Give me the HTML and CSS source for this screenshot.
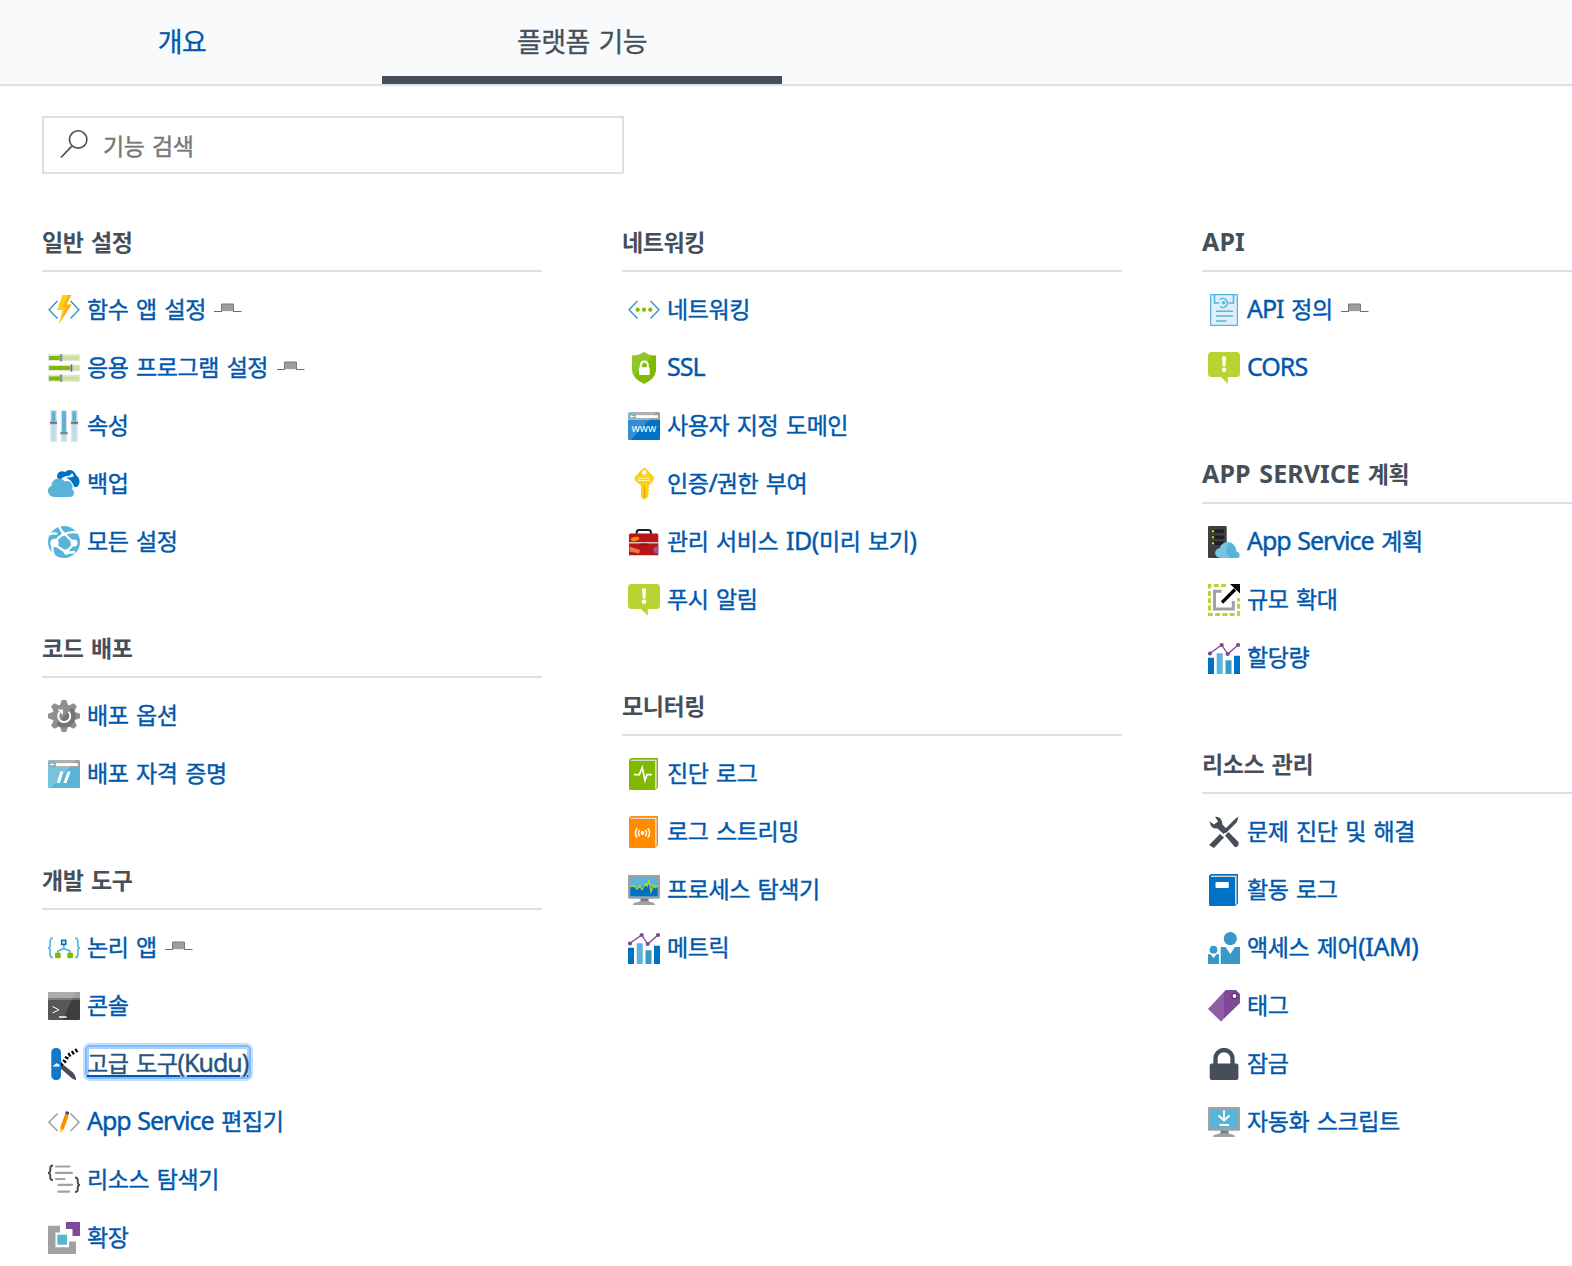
FILE: index.html
```html
<!DOCTYPE html>
<html lang="ko">
<head>
<meta charset="utf-8">
<title>플랫폼 기능</title>
<link rel="stylesheet" href="styles.css">
</head>
<body>
<svg class="sprite" aria-hidden="true">
  <symbol id="pin" viewBox="0 0 28 10"><path d="M0 8.500H7.500M19 8.500H27.500" stroke="#6d6d6d" stroke-width="1.200"/><rect x="7.500" y="1" width="12" height="7.200" fill="#9c9ea0"/><path d="M7.500 9V1H19.500V9" fill="none" stroke="#77797b"/></symbol>
  <symbol id="functions" viewBox="0 0 32 32"><path d="M9.500 7 1 15.700 9.500 24.500M22.500 7 31 15.700 22.500 24.500" fill="none" stroke="#3999c6" stroke-width="1.500"/><path d="M14.300 1H23.300L18.700 10.500H23.700L10.700 30.300 14.700 16H9Z" fill="#fcd116"/><path d="M20 1H23.300L18.700 10.500H23.700L10.700 30.300 18 13H14.500Z" fill="#ff9f17" opacity=".65"/></symbol>
  <symbol id="sliders" viewBox="0 0 32 32"><path d="M0 2.300h32v6.700H0zM0 12.700h32v6.600H0zM0 22.700h32v7H0z" fill="#e3e3e3"/><path d="M1 4h30v4H1zM1 14h30v4H1zM1 24.500h30v4H1z" fill="#cbe38f"/><path d="M1 4h11v4H1zM1 14h21v4H1zM1 24.500h11v4H1z" fill="#7fba00"/><path d="M11.500 2.300h3v7h-3zM22 12.500h3v7h-3zM11.500 22.700h3v7h-3z" fill="#b5b5b5"/><path d="M13 2.300v7M23.500 12.500v7M13 22.700v7" stroke="#666" stroke-width="1"/></symbol>
  <symbol id="properties" viewBox="0 0 32 32"><path d="M2.300 0h6.700v32H2.300zM12.700 0h6.300v32h-6.300zM23 0h6.700v32H23z" fill="#e1e1e1"/><path d="M3.500 1.300h4v29.500h-4zM14 1.300h4v29.500h-4zM24.300 1.300h4v29.500h-4z" fill="#b8dff0"/><path d="M3.500 1.300h4v11h-4zM14 1.300h4v21h-4zM24.300 1.300h4v11h-4z" fill="#59b4d9"/><path d="M2 11.300h7v3.200H2zM12.500 21.500h7v3.200h-7zM23 11.300h7v3.200h-7z" fill="#b5b5b5"/><path d="M2 12.800h7M12.500 23h7M23 12.800h7" stroke="#555" stroke-width="1.200"/></symbol>
  <symbol id="backup" viewBox="0 0 32 32"><path d="M9 9C9 4 13 2 17 4 20 1 26 1 28 7 32 10 33 16 29 19H20C15 14 11 13 9 9Z" fill="#0072c6"/><path d="M13 11C18 6 22 10 24 5L26 8C23 10 20 9 18 10 23 11 25 16 27 20L22 18Z" fill="#fff"/><path d="M5.500 29C-1.500 28-1.500 19 3.500 18 3.500 10 13 8 16.500 13.500 22 11.500 26 17 24 21 28 25 26 29 21.500 29Z" fill="#59b4d9"/></symbol>
  <symbol id="globe" viewBox="0 0 32 32"><circle cx="16" cy="16" r="16" fill="#59b4d9"/><path d="M1.500 8.500Q6 6.500 9 8M11 0Q13 5 16 7.500L27 18M29.500 6.500Q22 5 15.500 8.500 8 12 6.500 19M5 18Q3 24 6.500 30M7 19 18 26 26 18M18 26Q22 27 27 26" fill="none" stroke="#fff" stroke-width="2.300"/><circle cx="15" cy="7.800" r="2" fill="#fff"/><circle cx="6.500" cy="17" r="4.300" fill="#fff"/><circle cx="26" cy="17" r="3.500" fill="#fff"/><circle cx="18.500" cy="26" r="2.800" fill="#fff"/></symbol>
  <symbol id="gear" viewBox="0 0 32 32"><g fill="#8f8f8f"><circle cx="16" cy="16" r="11.500"/><path id="tooth" d="M11.500 6.500 13.800 0h4.400l2.300 6.500z"/><use href="#tooth" transform="rotate(45 16 16)"/><use href="#tooth" transform="rotate(90 16 16)"/><use href="#tooth" transform="rotate(135 16 16)"/><use href="#tooth" transform="rotate(180 16 16)"/><use href="#tooth" transform="rotate(225 16 16)"/><use href="#tooth" transform="rotate(270 16 16)"/><use href="#tooth" transform="rotate(315 16 16)"/></g><path d="M24 8 8 24C13 30 27 29 27.500 16 27.500 12 26 10 24 8Z" fill="#757575"/><path d="M11.800 12A6 6 0 1 0 20.500 11.800" fill="none" stroke="#fff" stroke-width="2"/><path d="M9.500 9.500h5.500v5.500z" fill="#fff"/></symbol>
  <symbol id="window" viewBox="0 0 32 32"><path d="M1 2h30q1 0 1 1v7H0V3q0-1 1-1z" fill="#9c9ea0"/><path d="M0 10h32v19q0 1-1 1H1q-1 0-1-1z" fill="currentColor"/><path d="M0 3q0-1 1-1h27L3 30H1q-1 0-1-1z" fill="#fff" opacity=".2"/><path d="M8 5.200h22v2.800H8z" fill="#fff"/><circle cx="4.500" cy="6.500" r="3" fill="#59b4d9"/><path d="M6.700 6.500H2.800M4.500 4.700 2.700 6.500 4.500 8.300" fill="none" stroke="#fff"/></symbol>
  <symbol id="credentials" viewBox="0 0 32 32"><use href="#window" color="#59b4d9"/><path d="M12.200 13.500h3.200L12 25H8.800zM19.500 13.500h3.200L18.500 25h-3.200z" fill="#fff"/></symbol>
  <symbol id="logic" viewBox="0 0 32 32"><path d="M5 6Q2.200 6 2.200 9V13Q2.200 15.500.3 16 2.200 16.500 2.200 19V23Q2.200 25.500 5 25.500M27 6Q29.800 6 29.800 9V13Q29.800 15.500 31.700 16 29.800 16.500 29.800 19V23Q29.800 25.500 27 25.500M15.800 13V17M9.800 21V19L15.800 16.500 22 19V21" fill="none" stroke="#59b4d9" stroke-width="1.700"/><path d="M13.700 8.400h4v4h-4z" fill="none" stroke="#0072c6" stroke-width="1.600"/><rect x="7" y="20.700" width="5.700" height="5.500" rx="1" fill="#7fba00"/><rect x="19.300" y="20.700" width="5.700" height="5.500" rx="1" fill="#7fba00"/></symbol>
  <symbol id="console" viewBox="0 0 32 32"><rect y="2" width="32" height="28" rx="1" fill="#3e3e3e"/><path d="M0 3q0-1 1-1h30q1 0 1 1v5H0z" fill="#a0a1a2"/><path d="M0 8h32v2H0z" fill="#6b6b6b"/><path d="M0 2h27L15 30H0z" fill="#fff" opacity=".13"/><path d="M4.500 16.500 11 19.800 4.500 23" fill="none" stroke="#fff" stroke-width="1"/><path d="M11 27h7.500" stroke="#fff" stroke-width="1.500"/></symbol>
  <symbol id="kudu" viewBox="0 0 32 32"><path d="M12.500 14.500 25 24.500Q28.500 29 28 32 25 31.500 23 29.500L11 19Z" fill="#464f59"/><path d="M12.500 16.500Q17 14 19.500 8L30 1.500" fill="none" stroke="#000" stroke-width="4" stroke-dasharray="2.200 1.900"/><rect x="3.300" width="9.700" height="32" rx="4.500" fill="#1278ca"/><path d="M5 18.500q0-2 2-1.700 1-2.500 3-.8 2 .3 2 2.500z" fill="#fff"/></symbol>
  <symbol id="editor" viewBox="0 0 32 32"><path d="M9.500 7.500 1 16.200 9.500 25M22.500 7.500 31 16.200 22.500 25" fill="none" stroke="#a0a1a2" stroke-width="1.600"/><path d="M16.900 8.500 20.600 9.800 15.700 23.500 12 22.200Z" fill="#ff8c00"/><path d="M12 22 15.700 23.300 12.200 27Z" fill="#fcc43c"/><path d="M18 5 21.300 6.200 20.400 9.200 16.900 8Z" fill="#464f59"/></symbol>
  <symbol id="resource" viewBox="0 0 32 32"><path d="M5 1.500Q2.300 1.500 2.300 4V6.500Q2.300 8.500 0 9 2.300 9.500 2.300 11.500V14Q2.300 16 5 16M27 13.500Q29.700 13.500 29.700 16V18.500Q29.700 20.500 32 21 29.700 21.500 29.700 23.500V26Q29.700 28 27 28" fill="none" stroke="#464f59" stroke-width="2"/><path d="M8 2.500h13.500M8 8.900h16M8 15h8.500M10.500 20.900h13.500M10.500 27.700h10.500" stroke="#a0a1a2" stroke-width="2.200" stroke-linecap="round"/></symbol>
  <symbol id="extension" viewBox="0 0 32 32"><path d="M0 3.800h12v6.700H7.500v14.700H21V19.500h7V32H0z" fill="#a0a1a2"/><path d="M18 0h14v14h-7.500V7H18z" fill="#804998"/><path d="M9.300 12.700h9.700v10H9.300z" fill="#59b4d9"/></symbol>
  <symbol id="network" viewBox="0 0 32 32"><path d="M9.500 7 1 15.700 9.500 24.500M22.500 7 31 15.700 22.500 24.500" fill="none" stroke="#3999c6" stroke-width="1.500"/><g fill="#7fba00"><circle cx="9.700" cy="15.700" r="2.100"/><circle cx="16" cy="15.700" r="2.100"/><circle cx="22.300" cy="15.700" r="2.100"/></g></symbol>
  <symbol id="ssl" viewBox="0 0 32 32"><path d="M16.200 0Q21 3.500 28 3.500V18Q28 26 16.200 32 4 26 4 18V3.500Q11 3.500 16.200 0Z" fill="#7fba00"/><path d="M16.200 0Q20 2.700 25 3.300L6 24Q4 21 4 18V3.500Q11 3.500 16.200 0Z" fill="#fff" opacity=".16"/><path d="M12.800 16V13a3.500 3.500 0 0 1 7 0V16" fill="none" stroke="#fff" stroke-width="2"/><rect x="11" y="15.300" width="10.700" height="7.700" rx=".8" fill="#fff"/></symbol>
  <symbol id="domain" viewBox="0 0 32 32"><use href="#window" color="#0072c6"/><text x="16" y="22" text-anchor="middle" class="www">www</text></symbol>
  <symbol id="key" viewBox="0 0 32 32"><path d="M14 1.200Q16.300-1 18.600 1.200L25 8Q27 10.500 25 13L21 17.500V19.500L20 20.500 21.500 22 20 23.500 21 25 20 27V29L16.300 32 13 29V17.500L7.500 13Q5.500 10.500 7.500 8Z" fill="#fcd116"/><circle cx="16.300" cy="4.500" r="2.200" fill="#fff"/><path d="M10 10.300h12M10 12.500h12" stroke="#fff3a8" stroke-width="1"/><path d="M16.500 18v12" stroke="#dfa800" stroke-width="1.300"/></symbol>
  <symbol id="toolbox" viewBox="0 0 32 32"><path d="M8.700 9V6.500Q8.700 4 11 4h9.500q2.500 0 2.500 2.500V9" fill="none" stroke="#1e1e1e" stroke-width="2"/><path d="M1 9q0-1.500 1.500-1.500h26.300q1.500 0 1.500 1.500v20.300H1z" fill="#ba141a"/><path d="M1 16.800h29.300" stroke="#e8e8e8" stroke-width="1.200"/><path d="M12.500 17.500h7v2h-7z" fill="#8c1015"/><ellipse cx="7" cy="13" rx="4.300" ry="2" fill="#ff8c00" transform="rotate(-10 7 13)"/><path d="M1.500 20.500 12 24 11 27.500 1.500 25.500z" fill="#e17a4e"/><path d="M30.300 20.500q-5-.5-5 4 1 3.500 5 3z" fill="#8e5aa5"/></symbol>
  <symbol id="alert" viewBox="0 0 32 32"><path d="M3.500 0h25Q32 0 32 3.500v18q0 3.500-3.500 3.500h-8.700v6.700L13 25H3.500Q0 25 0 21.500v-18Q0 0 3.500 0z" fill="#b8d432"/><path d="M14 4.500h4.200l-.8 10h-2.600z" fill="#fff"/><circle cx="16.100" cy="17.800" r="2.200" fill="#fff"/></symbol>
  <symbol id="book" viewBox="0 0 32 32"><path d="M3.500 0H30V29.500L27 32 3 4Z" fill="currentColor"/><path d="M3 1.500h25.700V29.500L27 31 3 5Z" fill="#d7d9da"/><path d="M1 2Q1.500 0 4 0H30V1.200H4Q2.500 1.500 3 3H27V32H2.500Q1 32 1 30.500Z" fill="currentColor"/></symbol>
  <symbol id="diagnostics" viewBox="0 0 32 32"><use href="#book" color="#7fba00"/><path d="M6 16.700h5.300L14.300 9.500 17 22.500 19 16.700h5" fill="none" stroke="#fff" stroke-width="1.700"/></symbol>
  <symbol id="stream" viewBox="0 0 32 32"><use href="#book" color="#ff8c00"/><circle cx="14.500" cy="17" r="1.900" fill="#fff"/><path d="M11.700 13.800Q9.300 17 11.700 20.200M9.200 12.300Q5.700 17 9.200 21.700M17.300 13.800Q19.700 17 17.300 20.200M19.800 12.300Q23.300 17 19.800 21.700" fill="none" stroke="#fff" stroke-width="1.400"/></symbol>
  <symbol id="activity" viewBox="0 0 32 32"><use href="#book" color="#0072c6"/><rect x="7.500" y="8" width="13.300" height="6" rx=".7" fill="#fff"/></symbol>
  <symbol id="monitor" viewBox="0 0 32 32"><path d="M12.500 24h8v4h-8z" fill="#7a7a7a"/><path d="M5 31q0-2.300 3-2.500l4-1.300h8.500l4 1.300q2.500.2 2.500 2.500z" fill="#a0a1a2"/><rect y="1" width="32" height="23.700" rx="1" fill="#a0a1a2"/><path d="M2.300 3.300h27.400v19H2.300z" fill="#59b4d9"/></symbol>
  <symbol id="process" viewBox="0 0 32 32"><use href="#monitor"/><path d="M2.300 13h6l3 1 5-3 3 1 2-2 3 4 5.400-2v10.300H2.300z" fill="#0072c6"/><path d="M2.300 13 6 11.500 9 15 12 12 14 15.500 17.500 10 19 12 21 6 23 17.500 25.500 11 27.500 13.500 29.700 12" fill="none" stroke="#b8d432" stroke-width="1.300"/></symbol>
  <symbol id="metrics" viewBox="0 0 32 32"><path d="M0 15.700h6V32H0zM26 13.700h6V32h-6z" fill="#0072c6"/><path d="M8.700 11.300h6V32h-6z" fill="#59b4d9"/><path d="M17.500 18.300h6V32h-6z" fill="#3999c6"/><path d="M2 11.300 13.700 3 19.700 12 30 3" fill="none" stroke="#804998" stroke-width="1.300"/><g fill="#804998"><circle cx="2" cy="11.500" r="2.100"/><circle cx="13.700" cy="3" r="2.100"/><circle cx="19.700" cy="12" r="2.100"/><circle cx="30" cy="3" r="2.100"/></g></symbol>
  <symbol id="apidef" viewBox="0 0 32 32"><path d="M2.600.6h26.800v30.800H2.600z" fill="#ddeff8" stroke="#59b4d9" stroke-width="1.300"/><path d="M6.500 1V9h5M25.500 1V9h-5M12 5.500a4.500 4.500 0 1 1 0 7" fill="none" stroke="#59b4d9" stroke-width="1.600"/><circle cx="15.500" cy="8.800" r="1.700" fill="#59b4d9"/><path d="M8 17.200h17M8 22h17M8 27h10.500" stroke="#59b4d9" stroke-width="1.400"/></symbol>
  <symbol id="plan" viewBox="0 0 32 32"><rect width="18.700" height="32" rx="1" fill="#3e3e3e"/><g stroke="#1e1e1e" stroke-width="3.600" stroke-linecap="round"><path d="M5 5.200h9.500M5 11.200h9.500M5 17.300h9.500"/></g><g fill="#b8d432"><circle cx="5" cy="5.200" r="1.200"/><circle cx="5" cy="11.200" r="1.200"/><circle cx="5" cy="17.300" r="1.200"/></g><path d="M12 32C5.500 31 5.500 23 12 22 13 15.500 23 13 27 20.500 28.500 22 28 24 28.500 25.500 32 26 33 31 29.500 32Z" fill="#59b4d9"/><path d="M12 32C5.500 31 5.500 23 12 22 13 17 18 15.500 22 16.500 17 21 17 27 22 32Z" fill="#fff" opacity=".2"/></symbol>
  <symbol id="scale" viewBox="0 0 32 32"><path d="M18 1.500H1.500V30.500H30.500V14" fill="none" stroke="#b8d432" stroke-width="3" stroke-dasharray="5 2.300"/><path d="M13.500 7.300H6.500V25H25.300V17" fill="none" stroke="#a0a1a2" stroke-width="3"/><path d="M14 18.500 27 5.500" stroke="#000" stroke-width="3.200"/><path d="M22 0H32V9.500Z" fill="#000"/></symbol>
  <symbol id="tools" viewBox="0 0 32 32"><path d="M1 29 12 18 16 21.500 6 32ZM17 19.500 20.500 16 30.500 26Q31.500 31 27 31.300ZM30.500 1 29 6 18 17 15.500 14.500 27.500 2.500Z" fill="#464f59"/><path d="M7 .7Q14 0 14.500 8.500L20 14.500 15.500 18 9.500 12.500Q3 13.500 1.500 5.500L6 8.500 10 5.500Z" fill="#464f59"/></symbol>
  <symbol id="iam" viewBox="0 0 32 32"><g fill="#3999c6"><circle cx="22.300" cy="6.700" r="6.600"/><circle cx="5.500" cy="17.700" r="3.900"/><path d="M12.700 15h4.800L22.300 22 27 15H32V32H12.700zM0 22.300h2.500L5.500 26 8.500 22.300H11V32H0z"/></g></symbol>
  <symbol id="tag" viewBox="0 0 32 32"><path d="M17.700 0H28L32 4V13L13 31.500 0 19Z" fill="#804998"/><path d="M17.700 0H16V29L13 31.500 0 19Z" fill="#fff" opacity=".12"/><circle cx="26.500" cy="6" r="2.600" fill="#fff" stroke="#5d2e73" stroke-width="1.300"/></symbol>
  <symbol id="lock" viewBox="0 0 32 32"><path d="M7.500 17V10.500a8.500 8.500 0 0 1 17 0V17" fill="none" stroke="#464f59" stroke-width="4.300"/><rect x="1.700" y="15.500" width="28.700" height="16.500" rx="2" fill="#464f59"/></symbol>
  <symbol id="script" viewBox="0 0 32 32"><use href="#monitor"/><path d="M16 4V14M10.500 9.500 16 14.500 21.500 9.500M11.500 19h9.500" fill="none" stroke="#fff" stroke-width="1.800"/></symbol>
</svg>

<nav class="tabs">
  <a class="tab">개요</a>
  <a class="tab tab-active">플랫폼 기능</a>
</nav>

<main>
  <label class="search">
    <svg viewBox="0 0 30 30"><path d="M1 29 12 17.500" stroke="#464f59" stroke-width="1.700"/><circle cx="18.800" cy="10.300" r="9" fill="none" stroke="#464f59" stroke-width="1.700"/></svg>
    <span>기능 검색</span>
  </label>

  <div class="columns">
    <div class="column">
      <section>
        <h2>일반 설정</h2>
        <ul>
          <li><svg><use href="#functions"/></svg><a>함수 앱 설정</a><svg class="pin"><use href="#pin"/></svg></li>
          <li><svg><use href="#sliders"/></svg><a>응용 프로그램 설정</a><svg class="pin"><use href="#pin"/></svg></li>
          <li><svg><use href="#properties"/></svg><a>속성</a></li>
          <li><svg><use href="#backup"/></svg><a>백업</a></li>
          <li><svg><use href="#globe"/></svg><a>모든 설정</a></li>
        </ul>
      </section>
      <section>
        <h2>코드 배포</h2>
        <ul>
          <li><svg><use href="#gear"/></svg><a>배포 옵션</a></li>
          <li><svg><use href="#credentials"/></svg><a>배포 자격 증명</a></li>
        </ul>
      </section>
      <section>
        <h2>개발 도구</h2>
        <ul>
          <li><svg><use href="#logic"/></svg><a>논리 앱</a><svg class="pin"><use href="#pin"/></svg></li>
          <li><svg><use href="#console"/></svg><a>콘솔</a></li>
          <li><svg><use href="#kudu"/></svg><a class="focused">고급 도구<span class="latin">(Kudu)</span></a></li>
          <li><svg><use href="#editor"/></svg><a><span class="latin">App Service</span> 편집기</a></li>
          <li><svg><use href="#resource"/></svg><a>리소스 탐색기</a></li>
          <li><svg><use href="#extension"/></svg><a>확장</a></li>
        </ul>
      </section>
    </div>

    <div class="column">
      <section>
        <h2>네트워킹</h2>
        <ul>
          <li><svg><use href="#network"/></svg><a>네트워킹</a></li>
          <li><svg><use href="#ssl"/></svg><a><span class="latin">SSL</span></a></li>
          <li><svg><use href="#domain"/></svg><a>사용자 지정 도메인</a></li>
          <li><svg><use href="#key"/></svg><a>인증<span class="latin">/</span>권한 부여</a></li>
          <li><svg><use href="#toolbox"/></svg><a>관리 서비스 <span class="latin wide">ID(</span>미리 보기<span class="latin">)</span></a></li>
          <li><svg><use href="#alert"/></svg><a>푸시 알림</a></li>
        </ul>
      </section>
      <section>
        <h2>모니터링</h2>
        <ul>
          <li><svg><use href="#diagnostics"/></svg><a>진단 로그</a></li>
          <li><svg><use href="#stream"/></svg><a>로그 스트리밍</a></li>
          <li><svg><use href="#process"/></svg><a>프로세스 탐색기</a></li>
          <li><svg><use href="#metrics"/></svg><a>메트릭</a></li>
        </ul>
      </section>
    </div>

    <div class="column">
      <section>
        <h2><span class="latin">API</span></h2>
        <ul>
          <li><svg><use href="#apidef"/></svg><a><span class="latin">API</span> 정의</a><svg class="pin"><use href="#pin"/></svg></li>
          <li><svg><use href="#alert"/></svg><a><span class="latin">CORS</span></a></li>
        </ul>
      </section>
      <section>
        <h2><span class="latin">APP SERVICE</span> 계획</h2>
        <ul>
          <li><svg><use href="#plan"/></svg><a><span class="latin">App Service</span> 계획</a></li>
          <li><svg><use href="#scale"/></svg><a>규모 확대</a></li>
          <li><svg><use href="#metrics"/></svg><a>할당량</a></li>
        </ul>
      </section>
      <section>
        <h2>리소스 관리</h2>
        <ul>
          <li><svg><use href="#tools"/></svg><a>문제 진단 및 해결</a></li>
          <li><svg><use href="#activity"/></svg><a>활동 로그</a></li>
          <li><svg><use href="#iam"/></svg><a>액세스 제어<span class="latin wide">(IAM)</span></a></li>
          <li><svg><use href="#tag"/></svg><a>태그</a></li>
          <li><svg><use href="#lock"/></svg><a>잠금</a></li>
          <li><svg><use href="#script"/></svg><a>자동화 스크립트</a></li>
        </ul>
      </section>
    </div>
  </div>
</main>
</body>
</html>
```
FILE: styles.css
```css
* { box-sizing: border-box; }

html, body { height: 1266px; overflow: hidden; }

body {
  margin: 0;
  background: #fff;
  color: #464f59;
  font-family: "Noto Sans CJK KR", "Noto Sans", sans-serif;
  font-size: 23px;
  letter-spacing: -0.45px;
  word-spacing: 1.7px;
}

.sprite { display: none; }

.tabs {
  display: flex;
  height: 86px;
  background: #f8fafb;
  border-bottom: 2px solid #d9e1e5;
}

.tab {
  width: 400px;
  height: 84px;
  line-height: 81px;
  text-align: center;
  font-size: 27px;
  letter-spacing: -0.6px;
  color: #0058ad;
  -webkit-text-stroke: 0.3px currentColor;
}

.tab:first-child { margin-left: -18px; }

.tab-active {
  color: #464f59;
  border-bottom: 8px solid #464f59;
}

main { padding: 30px 0 0 42px; }

.search {
  display: flex;
  align-items: center;
  width: 582px;
  height: 58px;
  padding-left: 16px;
  border: 2px solid #d9e1e5;
  color: #777;
}

.search svg { width: 29px; height: 30px; margin: 0 14px 2px 0; }

.search span { line-height: 54px; -webkit-text-stroke: 0.4px currentColor; }

.columns {
  display: grid;
  grid-template-columns: 500px 500px 1fr;
  column-gap: 80px;
  padding-top: 40px;
}

section { padding-bottom: 50px; }

h2 {
  height: 58px;
  margin: 0;
  border-bottom: 2px solid #d9e1e5;
  font-size: 23px;
  font-weight: 700;
  line-height: 55px;
  white-space: nowrap;
}

h2 .latin {
  letter-spacing: 0.1px;
  word-spacing: 2px;
}

ul { margin: 0; padding: 8px 0 0 6px; list-style: none; }

li { display: flex; align-items: center; height: 58px; }

li > svg { flex: none; width: 32px; height: 32px; margin: 2px 7px 0 0; }

li > svg.pin { width: 28px; height: 10px; margin: 0 0 3px 8.5px; }

li a {
  color: #0058ad;
  height: 32px;
  margin-bottom: 3px;
  line-height: 32px;
  white-space: nowrap;
  -webkit-text-stroke: 0.4px currentColor;
}

li .latin { word-spacing: 1px; }

.latin {
  font-family: "Noto Sans", sans-serif;
  font-size: 25px;
  letter-spacing: -1px;
  line-height: 1;
}

li .wide { letter-spacing: -0.4px; }

li .focused {
  height: 30px;
  margin-right: -1px;
  margin-bottom: 2px;
  padding-right: 1px;
  line-height: 31px;
  color: #265480;
  text-decoration: underline #0058ad;
  text-underline-offset: 3px;
  border-radius: 3px;
  box-shadow: inset 0 0 0 2px #a9d0fe, 0 0 0 2px #80bafc, 0 0 0 4px #c3dffe;
}

.www {
  fill: #fff;
  stroke: none;
  font: 10.5px "Noto Sans", sans-serif;
  letter-spacing: 0;
  word-spacing: 0;
}
```
